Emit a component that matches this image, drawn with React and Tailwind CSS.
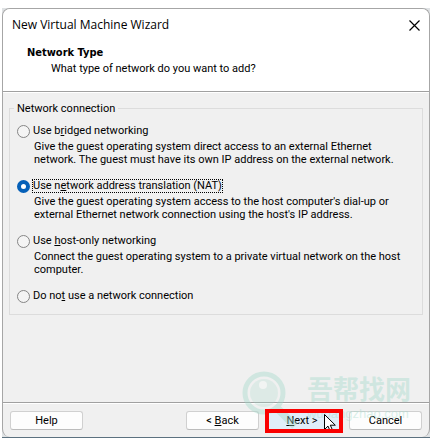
import { useState } from "react";

const options = [
  {
    id: "bridged",
    label: ["Use b", "r", "idged networking"],
    lines: [
      "Give the guest operating system direct access to an external Ethernet",
      "network. The guest must have its own IP address on the external network.",
    ],
  },
  {
    id: "nat",
    label: ["Use n", "e", "twork address translation (NAT)"],
    lines: [
      "Give the guest operating system access to the host computer's dial-up or",
      "external Ethernet network connection using the host's IP address.",
    ],
  },
  {
    id: "host",
    label: ["Use ", "h", "ost-only networking"],
    lines: [
      "Connect the guest operating system to a private virtual network on the host",
      "computer.",
    ],
  },
  { id: "none", label: ["Do no", "t", " use a network connection"], lines: [] },
];

const buttonStyle =
  "h-[19px] w-[73px] rounded-[3px] border border-[#d0d0d0] border-b-[#bcbcbc] bg-[#fdfdfd] text-center leading-4";

function Mnemonic({ children }) {
  return (
    <span className="underline decoration-1 underline-offset-1 [text-decoration-skip-ink:none]">
      {children}
    </span>
  );
}

function NetworkOption({ option, checked, onChange }) {
  const [before, key, after] = option.label;
  return (
    <div className="pb-3 last:pb-0">
      <div className="flex h-4 items-center">
        <input
          type="radio"
          id={option.id}
          name="network"
          checked={checked}
          onChange={onChange}
          className="mr-0.5 size-[13px] shrink-0 appearance-none rounded-full border border-[#858585] bg-[#f4f4f4] checked:border-4 checked:border-[#0560b8] checked:bg-white"
        />
        <label
          htmlFor={option.id}
          className={
            checked
              ? "border border-dotted border-black leading-3 whitespace-nowrap"
              : "border border-transparent leading-3 whitespace-nowrap"
          }
        >
          {before}
          <Mnemonic>{key}</Mnemonic>
          {after}
        </label>
      </div>
      {option.lines.length > 0 && (
        <p className="pt-px pl-[17px] leading-[13px] whitespace-nowrap">
          {option.lines[0]}
          <br />
          {option.lines[1]}
        </p>
      )}
    </div>
  );
}

function Watermark() {
  return (
    <div className="pointer-events-none absolute right-[18px] bottom-0 flex h-[71px] items-start text-[#a0d8c8] opacity-40">
      <svg width="66" height="71" viewBox="0 0 66 71" fill="none">
        <circle cx="23" cy="27" r="19" stroke="currentColor" strokeWidth="5" />
        <circle cx="23" cy="27" r="14" fill="currentColor" opacity=".6" />
        <circle cx="22" cy="19" r="4" fill="#f4faf8" />
        <path d="M35 41 54 60" stroke="currentColor" strokeWidth="8" />
      </svg>
      <div className="flex flex-col pt-1">
        <span className="font-['Noto_Sans_CJK_SC',sans-serif] text-[26px] leading-9 font-bold whitespace-nowrap">
          吾帮找网
        </span>
        <span className="font-['Liberation_Sans',sans-serif] text-[13px] leading-4 whitespace-nowrap">
          wubangzhao.com
        </span>
      </div>
    </div>
  );
}

export default function App() {
  const [selected, setSelected] = useState("nat");
  return (
    <main className="bg-white pt-2 pr-[7px] pb-2 pl-0.5 font-[Roboto,sans-serif] text-[11px] text-black">
      <div className="border-b border-[#5c717f] bg-[#dfe2e4]">
        <div className="relative overflow-hidden rounded-lg border border-b-0 border-[#a6a6a6] bg-[#f0f0f0]">
          <header className="border-b border-[#a0a0a0] bg-white">
            <div className="flex h-8 items-center justify-between px-[9px]">
              <h1 className="font-['Open_Sans',sans-serif] text-xs">New Virtual Machine Wizard</h1>
              <button aria-label="Close">
                <svg width="11" height="11" viewBox="0 0 11 11" stroke="black" strokeWidth="1.2">
                  <path d="M.5.5l10 10M10.5.5l-10 10" />
                </svg>
              </button>
            </div>
            <div className="h-[50px] pt-1 pl-6">
              <h2 className="font-['DejaVu_Sans_Condensed',sans-serif] leading-4 font-bold">
                Network Type
              </h2>
              <p className="pl-6 leading-4">What type of network do you want to add?</p>
            </div>
          </header>
          <div className="border-t border-white px-[6px] pt-[9px] pb-[87px]">
            <fieldset className="border border-[#dcdcdc] px-[7px] pb-[10px]">
              <legend className="-ml-[3px] px-[3px] leading-[13px]">Network connection</legend>
              <div className="pt-2">
                {options.map((option) => (
                  <NetworkOption
                    key={option.id}
                    option={option}
                    checked={selected === option.id}
                    onChange={() => setSelected(option.id)}
                  />
                ))}
              </div>
            </fieldset>
          </div>
          <footer className="border-t border-[#a0a0a0]">
            <div className="flex h-[34px] items-center border-t border-white px-[7px]">
              <button className={buttonStyle}>Help</button>
              <button className={buttonStyle + " ml-auto"}>
                &lt; <Mnemonic>B</Mnemonic>ack
              </button>
              <div className="relative mx-[6px]">
                <button className="block h-6 w-[78px] bg-[#e0eef9] pr-1 text-center leading-4">
                  <Mnemonic>N</Mnemonic>ext &gt;
                </button>
                <span className="pointer-events-none absolute inset-0 z-10 border-4 border-[#fa0000]" />
                <svg
                  className="absolute top-[5px] left-[59px] z-10"
                  width="13"
                  height="15"
                  viewBox="0 0 13 15"
                >
                  <path
                    d="M.5.5v15l3.5-3.4 2.4 5.4 2.3-1-2.4-5.3h5z"
                    fill="white"
                    stroke="black"
                  />
                </svg>
              </div>
              <button className={buttonStyle}>Cancel</button>
            </div>
          </footer>
          <Watermark />
        </div>
      </div>
    </main>
  );
}
